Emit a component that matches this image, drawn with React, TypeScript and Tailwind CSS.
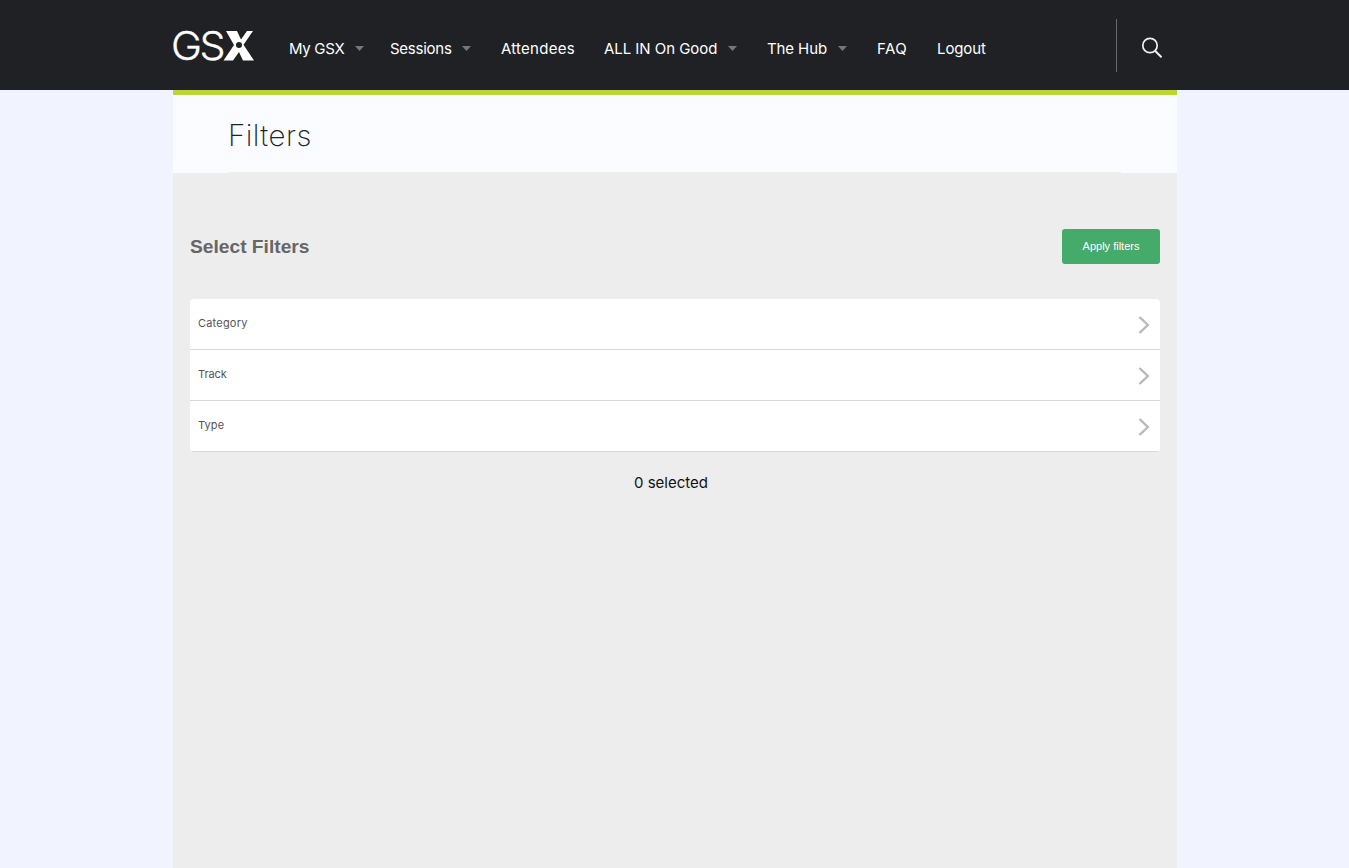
import React from "react";

type NavItem = { label: string; arrow?: string; box: string; text: string };

const NAV: NavItem[] = [
  { label: "My GSX", arrow: "mr-[26px]", box: "w-[101px]", text: "tracking-[-0.3px]" },
  { label: "Sessions", arrow: "mr-[30px]", box: "w-[111px]", text: "tracking-[-0.25px]" },
  { label: "Attendees", box: "w-[103px]", text: "tracking-[0.25px]" },
  { label: "ALL IN On Good", arrow: "mr-[30px]", box: "w-[163px]", text: "tracking-[-0.05px]" },
  { label: "The Hub", arrow: "mr-[30px]", box: "w-[110px]", text: "tracking-[-0.1px]" },
  { label: "FAQ", box: "w-[60px]", text: "tracking-[0.4px]" },
  { label: "Logout", box: "w-[60px]", text: "tracking-[-0.1px]" },
];

const FILTERS = [
  { name: "Category", text: "tracking-[0.2px]" },
  { name: "Track", text: "tracking-[-0.1px]" },
  { name: "Type", text: "tracking-[0.1px]" },
];

function Logo() {
  return (
    <svg className="mt-[2px] block shrink-0 overflow-visible" width="82" height="32" viewBox="0 0 82 32" aria-label="GSX">
      <g fill="#fff" stroke="#fff" strokeWidth="0.300" fontFamily="Inter, sans-serif" fontWeight="300" fontSize="40">
        <text x="-2" y="30" textLength="31" lengthAdjust="spacingAndGlyphs">G</text>
        <text x="26.500" y="30" textLength="26" lengthAdjust="spacingAndGlyphs">S</text>
      </g>
      <path fill="#fff" d="M53 1h11l4 8.500L74 1h6L70.500 14.800L81 30.500H70L66 22l-6 8.500h-9.500L61 15z" />
      <circle cx="66" cy="15" r="3" fill="#202124" />
    </svg>
  );
}

function Header() {
  return (
    <header className="h-[90px] shrink-0 bg-[#202124]">
      <div className="ml-[173px] flex h-full w-[1004px] items-center">
        <Logo />
        <nav className="ml-[34px] flex text-[15px] leading-[22px] text-white">
          {NAV.map((item) => (
            <a key={item.label} className={`flex items-center whitespace-nowrap pt-[7px] ${item.box}`}>
              <span className={item.text}>{item.label}</span>
              {item.arrow && (
                <svg className={`ml-auto block shrink-0 ${item.arrow}`} width="9" height="5" viewBox="0 0 9 5">
                  <path d="M0 0h9L4.500 5z" fill="#77777a" />
                </svg>
              )}
            </a>
          ))}
        </nav>
        <div className="ml-auto flex h-[53px] w-[61px] items-center border-l border-[#68686b] pl-6 pt-[6px]">
          <svg width="22" height="22" viewBox="0 0 22 22" fill="none" stroke="#f2f2f2">
            <circle cx="9" cy="8.500" r="7.200" strokeWidth="1.700" />
            <path d="M14 13.700L20.500 20.200" strokeWidth="2" />
          </svg>
        </div>
      </div>
    </header>
  );
}

export default function App() {
  return (
    <div className="flex h-[868px] flex-col overflow-hidden bg-[#f1f4ff] font-['Inter',sans-serif]">
      <Header />
      <main className="ml-[173px] flex w-[1004px] grow flex-col border-t-[5px] border-[#bbd634] bg-[#ededed]">
        <div className="h-[78px] bg-[#fbfcff] pl-[55px] pr-14">
          <div className="h-full border-b border-[#eeeff2] pt-5">
            <h1 className="text-[29.5px] font-extralight leading-10 tracking-[0.4px] text-[#202124]">Filters</h1>
          </div>
        </div>
        <section className="px-[17px] pt-14">
          <div className="flex h-[35px] items-center justify-between">
            <h2 className="pt-px font-['Liberation_Sans',sans-serif] text-[19.2px] font-bold text-[#666]">Select Filters</h2>
            <button className="h-[35px] w-[98px] rounded-[3px] bg-[#44ab6a] font-['Liberation_Sans',sans-serif] text-[11px] text-white">
              Apply filters
            </button>
          </div>
          <ul className="mt-[35px] overflow-hidden rounded-[4px] bg-white">
            {FILTERS.map(({ name, text }) => (
              <li key={name} className="flex h-[51px] items-center justify-between border-b border-[#d8d8d8] pl-2 pr-[10px]">
                <span className={`pb-[2px] text-[11px] text-[#555] ${text}`}>{name}</span>
                <svg className="mt-[2px]" width="12" height="18" viewBox="0 0 12 18" fill="none" stroke="#b8b8b8" strokeWidth="2.400">
                  <path d="M1.500 1L9.800 9L1.500 17" />
                </svg>
              </li>
            ))}
          </ul>
          <p className="mt-5 pr-2 text-center text-[15px] leading-[22px] text-[#111]">0 selected</p>
        </section>
      </main>
    </div>
  );
}
